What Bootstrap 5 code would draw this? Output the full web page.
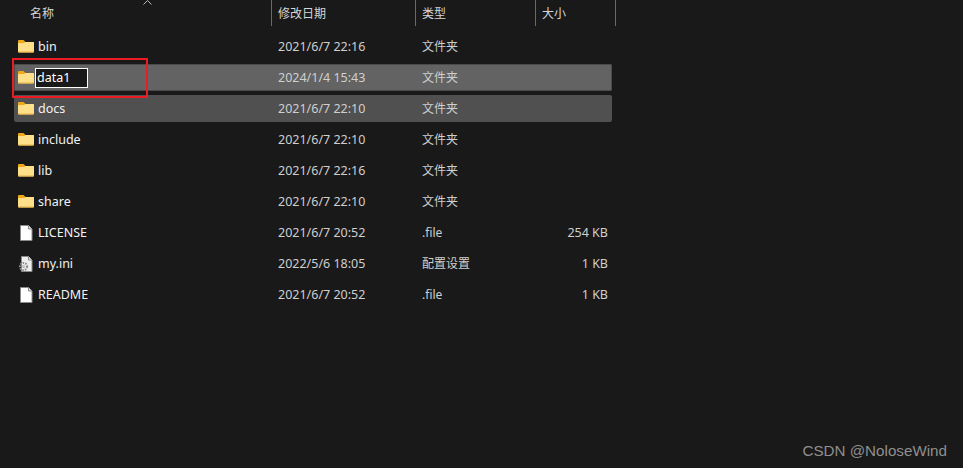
<!DOCTYPE html>
<html lang="zh">
<head>
    <meta charset="UTF-8">
    <title>Explorer</title>
    <link href="https://cdn.jsdelivr.net/npm/bootstrap@5.3.0/dist/css/bootstrap.min.css" rel="stylesheet">
    <style>
        html, body { height: 100%; }
        body { background: #191919; color: #dcdcdc; font: 12.5px/1 "Noto Sans", "Noto Sans CJK SC", sans-serif; overflow: hidden; position: relative; }
        .fe-head { height: 26px; width: 616px; }
        .fe-h { color: #d6d6d6; font-size: 12px; padding-top: 8px; height: 26px; border-right: 1px solid #6a6a6a; position: relative; }
        .fe-h1 { width: 272px; padding-left: 30px; }
        .fe-h2 { width: 144px; padding-left: 6px; }
        .fe-h3 { width: 120px; padding-left: 6px; }
        .fe-h4 { width: 80px; padding-left: 6px; }
        .fe-sort { position: absolute; left: 143px; top: 0; }
        .fe-list { padding: 7px 0 0 14px; width: 612px; gap: 4px; }
        .fe-row { height: 27px; border-radius: 2px; }
        .fe-row.sel { background: #636363; box-shadow: inset 0 0 0 1px #4a4a4a; }
        .fe-row.hot { background: #505050; }
        .fe-name { width: 258px; padding-left: 4px; gap: 4px; color: #f2f2f2; font-size: 12.5px; }
        .fe-label { padding-top: 2px; }
        .fe-ico { width: 16px; height: 16px; flex: none; }
        .fe-date { width: 144px; padding: 1px 0 0 6px; color: #cfcfcf; }
        .fe-type { width: 120px; padding: 1px 0 0 6px; color: #cfcfcf; font-size: 12px; }
        .fe-size { width: 72px; padding-top: 1px; text-align: right; color: #cfcfcf; }
        .fe-edit { background: #191919; border: 1px solid #fff; color: #fff; width: 53px; height: 20px; padding-left: 1px; line-height: 17px; margin-left: -3px; }
        .fe-redbox { position: absolute; left: 12px; top: 58px; width: 136px; height: 40px; border: 2px solid #ed1c24; }
        .fe-mark { position: absolute; right: 16px; bottom: 10px; color: #8f8f8f; font: 15.2px/1 "Liberation Sans", sans-serif; }
    </style>
</head>
<body>
    <svg class="d-none">
        <symbol id="folder" viewBox="0 0.5 16 16">
            <path d="M0 2.5Q0 1.5 1 1.5H5.5L7.5 3.5H16V6H0Z" fill="#f0a818"/>
            <path d="M0 5.5Q0 4.5 1 4.5H6L7.5 3.5H15Q16 3.5 16 4.5V13Q16 14 15 14H1Q0 14 0 13Z" fill="#fee08a"/>
            <path d="M0 13H16V13.2Q16 14 15 14H1Q0 14 0 13.2Z" fill="#e8b040"/>
        </symbol>
        <symbol id="file" viewBox="0 0 16 16">
            <path d="M2.5 .5H10.5L14 4V15.5H2.5Z" fill="#fff" stroke="#8a8a8a"/>
            <path d="M10.5 .5V4H14" fill="#ddd" stroke="#8a8a8a"/>
        </symbol>
        <symbol id="ini" viewBox="0 0 16 16">
            <path d="M3.5 .5H10.5L14 4V15.5H3.5Z" fill="#eee" stroke="#8a8a8a"/>
            <path d="M10.5 .5V4H14" fill="#ddd" stroke="#8a8a8a"/>
            <circle cx="5.5" cy="10.5" r="3.6" fill="none" stroke="#8c8c8c" stroke-width="2" stroke-dasharray="1.6 1"/>
            <circle cx="5.5" cy="10.5" r="1.6" fill="#bcbcbc"/>
        </symbol>
    </svg>

    <div class="fe-head d-flex">
        <div class="fe-h fe-h1">名称
            <svg class="fe-sort" width="9" height="5" viewBox="0 0 9 5"><path d="M.5 4.5L4.5 .5L8.5 4.5" fill="none" stroke="#bdbdbd"/></svg>
        </div>
        <div class="fe-h fe-h2">修改日期</div>
        <div class="fe-h fe-h3">类型</div>
        <div class="fe-h fe-h4">大小</div>
    </div>

    <div id="file-list" class="fe-list d-flex flex-column"></div>

    <div class="fe-redbox"></div>
    <div class="fe-mark">CSDN @NoloseWind</div>

    <script src="https://cdn.jsdelivr.net/npm/bootstrap@5.3.0/dist/js/bootstrap.bundle.min.js"></script>
    <script>
        const files = [
            { name: 'bin', date: '2021/6/7 22:16', type: '文件夹', size: '', icon: 'folder' },
            { name: 'data1', date: '2024/1/4 15:43', type: '文件夹', size: '', icon: 'folder', cls: 'sel', edit: true },
            { name: 'docs', date: '2021/6/7 22:10', type: '文件夹', size: '', icon: 'folder', cls: 'hot' },
            { name: 'include', date: '2021/6/7 22:10', type: '文件夹', size: '', icon: 'folder' },
            { name: 'lib', date: '2021/6/7 22:16', type: '文件夹', size: '', icon: 'folder' },
            { name: 'share', date: '2021/6/7 22:10', type: '文件夹', size: '', icon: 'folder' },
            { name: 'LICENSE', date: '2021/6/7 20:52', type: '.file', size: '254 KB', icon: 'file' },
            { name: 'my.ini', date: '2022/5/6 18:05', type: '配置设置', size: '1 KB', icon: 'ini' },
            { name: 'README', date: '2021/6/7 20:52', type: '.file', size: '1 KB', icon: 'file' }
        ];
        const list = document.getElementById('file-list');
        files.forEach(f => {
            const row = document.createElement('div');
            row.className = 'fe-row d-flex align-items-center ' + (f.cls || '');
            const label = f.edit ? `<span class="fe-edit">${f.name}</span>` : `<span class="fe-label">${f.name}</span>`;
            row.innerHTML = `<div class="fe-name d-flex align-items-center"><svg class="fe-ico"><use href="#${f.icon}"/></svg>${label}</div>`
                + `<div class="fe-date">${f.date}</div><div class="fe-type">${f.type}</div><div class="fe-size">${f.size}</div>`;
            list.appendChild(row);
        });
    </script>
</body>
</html>
